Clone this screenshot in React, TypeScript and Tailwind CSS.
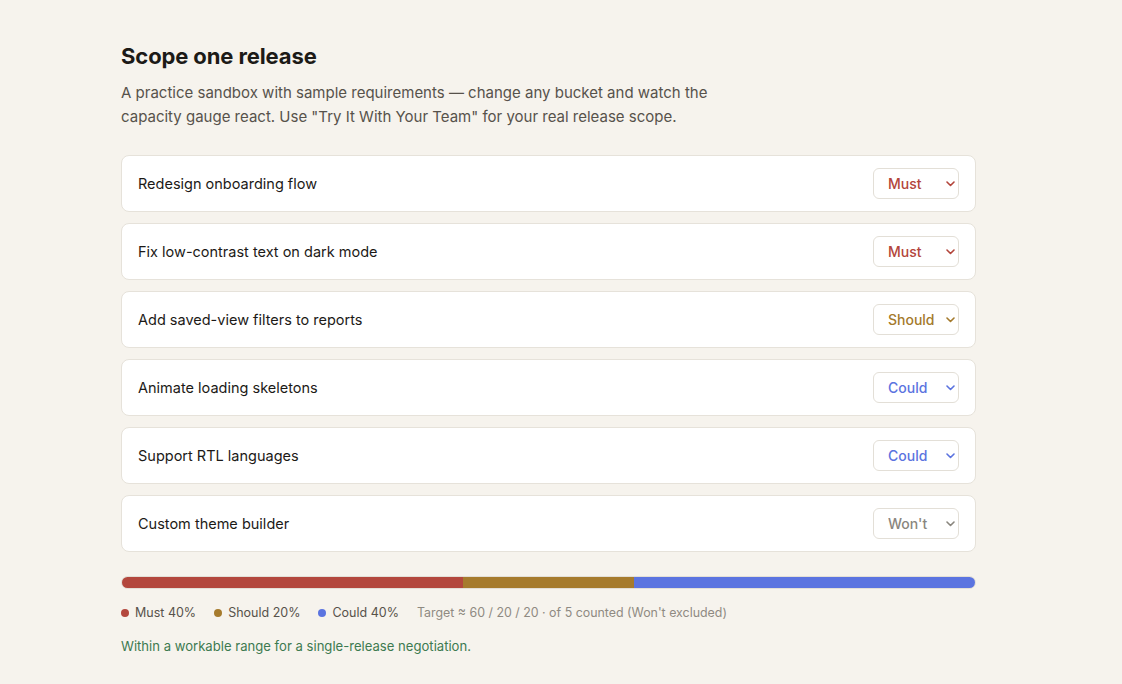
import React, { useState } from "react";

type Bucket = "Must" | "Should" | "Could" | "Won't";

const BUCKET_COLOR: Record<Bucket, string> = {
  Must: "text-[#b3453b]",
  Should: "text-[#a47a2c]",
  Could: "text-[#5b73df]",
  "Won't": "text-[#8a867e]",
};

const initialItems: { id: number; title: string; bucket: Bucket }[] = [
  { id: 1, title: "Redesign onboarding flow", bucket: "Must" },
  { id: 2, title: "Fix low-contrast text on dark mode", bucket: "Must" },
  { id: 3, title: "Add saved-view filters to reports", bucket: "Should" },
  { id: 4, title: "Animate loading skeletons", bucket: "Could" },
  { id: 5, title: "Support RTL languages", bucket: "Could" },
  { id: 6, title: "Custom theme builder", bucket: "Won't" },
];

export default function App() {
  const [items, setItems] = useState(initialItems);

  const counted = items.filter(i => i.bucket !== "Won't");
  const pct = (b: Bucket) =>
    counted.length ? Math.round((counted.filter(i => i.bucket === b).length / counted.length) * 100) : 0;
  const must = pct("Must");
  const should = pct("Should");
  const could = pct("Could");

  return (
    <div
      className="min-h-screen bg-[#f6f3ed] text-[#1c1a17]"
      style={{ fontFamily: "Inter, 'Noto Sans', sans-serif" }}
    >
      <div className="w-[855px] ml-[121px] pt-[41px]">
        <h1 className="text-[22px] font-bold leading-[30px] tracking-[-0.005em] text-[#1c1a17]">Scope one release</h1>
        <p className="mt-[10px] max-w-[600px] text-[15px] leading-[24px] text-[#57524b]">
          A practice sandbox with sample requirements — change any bucket and watch the capacity gauge react. Use "Try
          It With Your Team" for your real release scope.
        </p>

        <div className="mt-[26px] flex flex-col gap-[11px]">
          {items.map(item => (
            <div
              key={item.id}
              className="flex h-[57px] items-center justify-between rounded-[8px] border border-[#e6e2da] bg-white pl-[16px] pr-[16px]"
            >
              <span className="text-[14.5px] text-[#1c1a17]">{item.title}</span>
              <div className="relative">
                <select
                  value={item.bucket}
                  onChange={e =>
                    setItems(items.map(i => (i.id === item.id ? { ...i, bucket: e.target.value as Bucket } : i)))
                  }
                  className={`h-[31px] w-[86px] appearance-none rounded-[6px] border border-[#e3dfd7] bg-white pl-[14px] text-[14px] font-medium outline-none ${BUCKET_COLOR[item.bucket]}`}
                >
                  <option value="Must">Must</option>
                  <option value="Should">Should</option>
                  <option value="Could">Could</option>
                  <option value="Won't">Won't</option>
                </select>
                <svg
                  className={`pointer-events-none absolute right-[4px] top-[13px] ${BUCKET_COLOR[item.bucket]}`}
                  width="9"
                  height="6"
                  viewBox="0 0 9 6"
                  fill="none"
                >
                  <path d="M1 1l3.5 3.5L8 1" stroke="currentColor" strokeWidth="1.6" strokeLinecap="round" strokeLinejoin="round" />
                </svg>
              </div>
            </div>
          ))}
        </div>

        <div className="mt-[24px] flex h-[13px] overflow-hidden rounded-full border border-[#e3dfd7] bg-[#ebe7df]">
          <div className="bg-[#b3473d]" style={{ width: `${must}%` }} />
          <div className="bg-[#a67b2d]" style={{ width: `${should}%` }} />
          <div className="bg-[#5b74e0]" style={{ width: `${could}%` }} />
        </div>

        <div className="mt-[15px] flex items-center text-[12.5px] text-[#57524b]">
          <span className="flex items-center gap-[6px]">
            <span className="h-[8px] w-[8px] rounded-full bg-[#b3473d]" />
            Must {must}%
          </span>
          <span className="ml-[18px] flex items-center gap-[6px]">
            <span className="h-[8px] w-[8px] rounded-full bg-[#a67b2d]" />
            Should {should}%
          </span>
          <span className="ml-[18px] flex items-center gap-[6px]">
            <span className="h-[8px] w-[8px] rounded-full bg-[#5b74e0]" />
            Could {could}%
          </span>
          <span className="ml-[18px] text-[12.4px] text-[#8f8a82]">
            Target ≈ 60 / 20 / 20 · of {counted.length} counted (Won't excluded)
          </span>
        </div>

        <p className="mt-[14px] text-[13.1px] text-[#3d7a50]">Within a workable range for a single-release negotiation.</p>
      </div>
    </div>
  );
}
